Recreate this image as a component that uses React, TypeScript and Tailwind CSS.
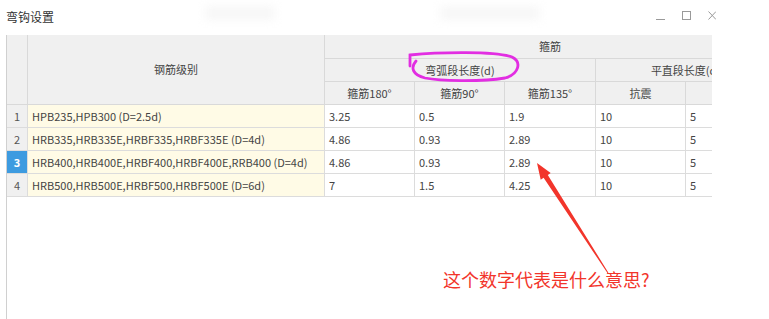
import React from 'react'

const rows = [
	{ n: '1', grade: 'HPB235,HPB300 (D=2.5d)', v: ['3.25', '0.5', '1.9', '10', '5'] },
	{ n: '2', grade: 'HRB335,HRB335E,HRBF335,HRBF335E (D=4d)', v: ['4.86', '0.93', '2.89', '10', '5'] },
	{ n: '3', grade: 'HRB400,HRB400E,HRBF400,HRBF400E,RRB400 (D=4d)', v: ['4.86', '0.93', '2.89', '10', '5'] },
	{ n: '4', grade: 'HRB500,HRB500E,HRBF500,HRBF500E (D=6d)', v: ['7', '1.5', '4.25', '10', '5'] },
]

const font = { fontFamily: '"Noto Sans CJK SC", "Noto Sans", sans-serif' }

const th = 'border border-[#d9d9d9] bg-[#f0f0f0] font-normal text-[11px] text-[#444] text-center p-0'
const td = 'border border-[#dcdcdc] text-[11px] text-[#444] px-[4px] py-0 text-left whitespace-nowrap'

const App = () => {
	return (
		<div className="relative w-[769px] h-[319px] bg-white overflow-hidden flex flex-col" style={font}>
			{/* title bar */}
			<div className="h-[35px] flex items-start pt-[8px] pl-[6px] w-[712px] relative">
				<span className="text-[12px] text-[#333]">弯钩设置</span>
				<div className="absolute left-[205px] top-[6px] w-[70px] h-[14px] bg-[#f7f7f7] blur-[5px]" />
				<div className="absolute left-[440px] top-[6px] w-[100px] h-[14px] bg-[#f7f7f7] blur-[5px]" />
				<div className="ml-auto flex items-center gap-[17px] pt-[3px]">
					<div className="w-[9px] h-[1px] bg-[#9a9a9a] mt-[8px]" />
					<div className="w-[9px] h-[9px] border border-[#9a9a9a]" />
					<svg width="8" height="9" viewBox="0 0 8 9" className="-mr-[4px]">
						<path d="M0.5 0.5 L8 8.5 M8 0.5 L0.5 8.5" stroke="#9a9a9a" strokeWidth="1" />
					</svg>
				</div>
			</div>

			{/* table area */}
			<div className="ml-[6px] w-[706px] flex-1 border-l border-[#d0d0d0] overflow-hidden">
				<table className="table-fixed border-collapse w-[768px] -mt-px -ml-px">
					<colgroup>
						<col className="w-[21px]" />
						<col className="w-[297px]" />
						<col className="w-[90px]" />
						<col className="w-[90px]" />
						<col className="w-[91px]" />
						<col className="w-[90px]" />
						<col className="w-[90px]" />
					</colgroup>
					<thead>
						<tr className="h-[24px]">
							<th rowSpan={3} className={th}></th>
							<th rowSpan={3} className={th}>钢筋级别</th>
							<th colSpan={5} className={th}>箍筋</th>
						</tr>
						<tr className="h-[23px]">
							<th colSpan={3} className={th}>弯弧段长度(d)</th>
							<th colSpan={2} className={th}>平直段长度(d)</th>
						</tr>
						<tr className="h-[23px]">
							<th className={th}>箍筋180°</th>
							<th className={th}>箍筋90°</th>
							<th className={th}>箍筋135°</th>
							<th className={th}>抗震</th>
							<th className={th}></th>
						</tr>
					</thead>
					<tbody>
						{rows.map((r) => (
							<tr key={r.n} className="h-[23px]">
								<td
									className={
										r.n === '3'
											? 'border border-[#dcdcdc] bg-[#3d9be0] text-white text-[11px] text-center p-0 font-bold'
											: 'border border-[#dcdcdc] bg-[#f0f0f0] text-[#555] text-[11px] text-center p-0'
									}
								>
									{r.n}
								</td>
								<td className={td + ' bg-[#fffbe6]'}>{r.grade}</td>
								{r.v.map((x, i) => (
									<td key={i} className={td}>
										{x}
									</td>
								))}
							</tr>
						))}
					</tbody>
				</table>
			</div>

			{/* annotations */}
			<svg className="absolute left-0 top-0 pointer-events-none" width="769" height="319" viewBox="0 0 769 319">
				<path
					d="M410,66 L410,55 C440,52 495,51 512,57 C522,62 519,74 505,78 C480,82 440,81 425,78 C413,75 410,68 416,61"
					fill="none"
					stroke="#e22ee2"
					strokeWidth="2.8"
					strokeLinecap="round"
				/>
				<polygon
					points="537,163 550.7,173.1 547.8,175 608.4,272.7 607.6,273.3 543.6,177.8 540.7,179.7"
					fill="#f2352b"
				/>
			</svg>
			<div className="absolute left-[443px] top-[267px] text-[18px] leading-[24px] text-[#f2352b]">
				这个数字代表是什么意思?
			</div>
		</div>
	)
}

export default App
